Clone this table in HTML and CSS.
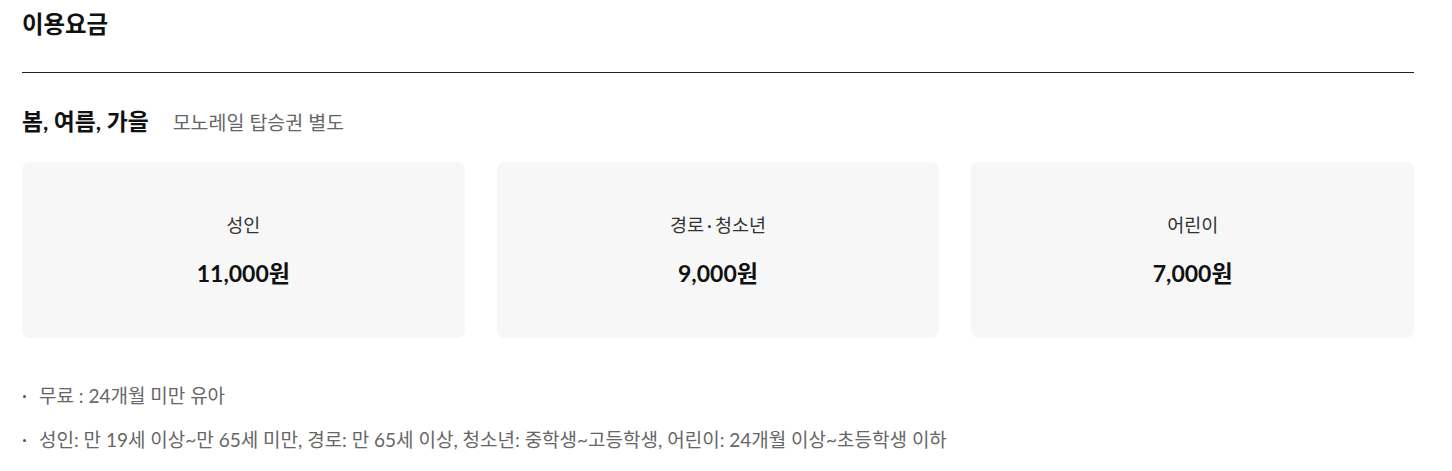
FILE: index.html
```html
<!DOCTYPE html>
<html lang="ko">
<head>
<meta charset="utf-8">
<link rel="stylesheet" href="styles.css">
</head>
<body>
<section class="fee">
  <h2 class="fee-title">이용요금</h2>
  <div class="season">
    <h3 class="season-name">봄, 여름, 가을</h3>
    <span class="season-note">모노레일 탑승권 별도</span>
  </div>
  <div class="cards">
    <div class="card"><p class="card-label">성인</p><p class="card-price">11,000원</p></div>
    <div class="card"><p class="card-label">경로<span class="dot">·</span>청소년</p><p class="card-price">9,000원</p></div>
    <div class="card"><p class="card-label">어린이</p><p class="card-price">7,000원</p></div>
  </div>
  <ul class="notes">
    <li>무료 : 24개월 미만 유아</li>
    <li>성인: 만 19세 이상~만 65세 미만, 경로: 만 65세 이상, 청소년: 중학생~고등학생, 어린이: 24개월 이상~초등학생 이하</li>
  </ul>
</section>
</body>
</html>
```

FILE: styles.css
```css
* { box-sizing: border-box; }
body {
  margin: 0;
  background: #fff;
  font-family: Lato, "Noto Sans CJK KR", sans-serif;
  color: #222;
}
.fee { padding: 0 38px 0 22px; }
.fee-title {
  margin: 0;
  padding: 8px 0 32px;
  font-size: 23.4px;
  line-height: 32px;
  font-weight: 700;
  color: #111;
  border-bottom: 1px solid #222;
}
.season {
  display: flex;
  align-items: baseline;
  gap: 24px;
  margin-top: 33px;
}
.season-name {
  margin: 0;
  font-size: 22.8px;
  line-height: 30px;
  font-weight: 700;
  color: #111;
}
.season-note {
  font-size: 19.5px;
  color: #666;
}
.cards {
  display: grid;
  grid-template-columns: repeat(3, 1fr);
  gap: 32px;
  margin-top: 26px;
}
.card {
  background: #f7f7f7;
  border-radius: 8px;
  height: 176px;
  display: flex;
  flex-direction: column;
  align-items: center;
  justify-content: center;
  gap: 20px;
}
.card p { margin: 0; }
.card-label {
  font-size: 18.5px;
  line-height: 26px;
  color: #333;
}
.dot {
  margin: 0 3px;
}
.card-price {
  font-size: 23px;
  line-height: 30px;
  font-weight: 700;
  color: #111;
}
.notes {
  list-style: none;
  margin: 43px 0 0;
  padding: 0;
}
.notes li {
  position: relative;
  padding-left: 17px;
  font-size: 19px;
  line-height: 30px;
  color: #666;
  margin-bottom: 14px;
}
.notes li::before {
  content: "";
  position: absolute;
  left: 1px;
  top: 14px;
  width: 3px;
  height: 3px;
  border-radius: 50%;
  background: #555;
}
```
